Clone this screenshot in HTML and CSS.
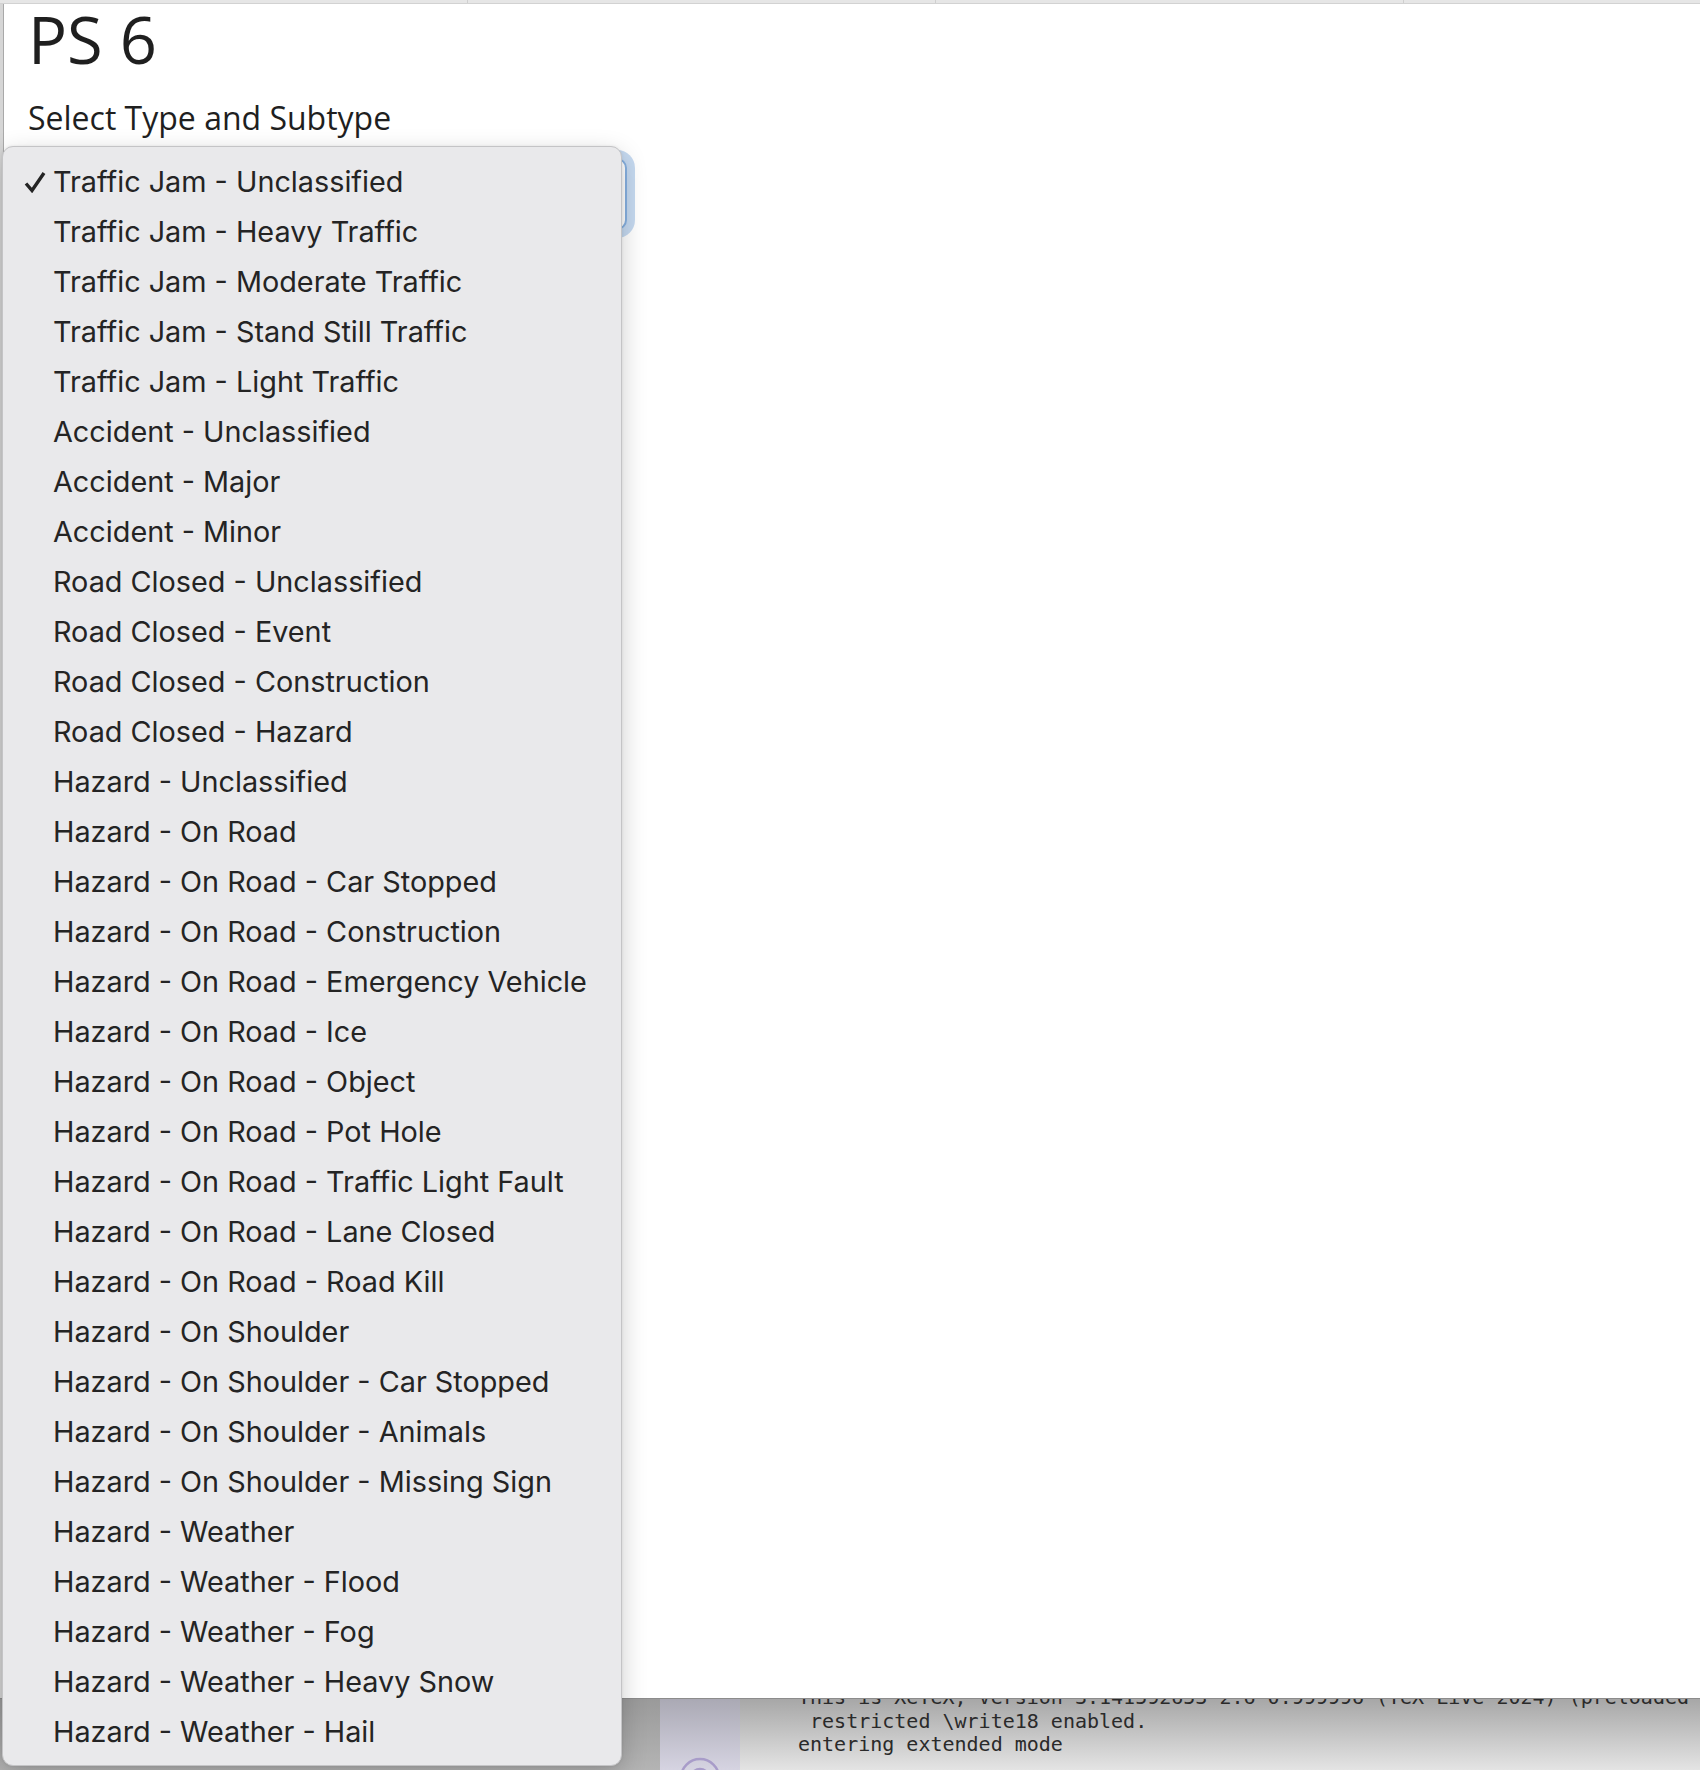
FILE: index.html
```
<!DOCTYPE html>
<html lang="en">
<head>
<meta charset="utf-8">
<title>PS 6</title>
<link rel="stylesheet" href="styles.css">
</head>
<body>
<div class="screen">
  <div class="tabstrip">
    <span class="tab"></span><span class="tab"></span><span class="tab"></span><span class="tab"></span>
  </div>
  <div class="workspace">
    <div class="edge"></div>
    <main class="page">
      <h1 class="title">PS 6</h1>
      <div class="label">Select Type and Subtype</div>
      <div class="select"></div>
    </main>
  </div>
  <div class="console-row">
    <div class="gutter"></div>
    <div class="sidebar">
      <svg class="sideicon" width="44" height="44" viewBox="0 0 44 44"><circle cx="22" cy="22" r="19" fill="none" stroke="#a89cc9" stroke-width="2.5"/><circle cx="22" cy="22" r="9" fill="none" stroke="#a89cc9" stroke-width="2.5"/></svg>
    </div>
    <pre class="console">This is XeTeX, Version 3.141592653-2.6-0.999996 (TeX Live 2024) (preloaded
 restricted \write18 enabled.
entering extended mode</pre>
  </div>

  <ul class="menu">
    <li class="item selected"><svg class="check" width="22" height="22" viewBox="0 0 22 22"><path d="M2 12.5 L8 19.5 L20 2" fill="none" stroke="#242424" stroke-width="3.4" stroke-linejoin="miter"/></svg>Traffic Jam - Unclassified</li>
    <li class="item">Traffic Jam - Heavy Traffic</li>
    <li class="item">Traffic Jam - Moderate Traffic</li>
    <li class="item">Traffic Jam - Stand Still Traffic</li>
    <li class="item">Traffic Jam - Light Traffic</li>
    <li class="item">Accident - Unclassified</li>
    <li class="item">Accident - Major</li>
    <li class="item">Accident - Minor</li>
    <li class="item">Road Closed - Unclassified</li>
    <li class="item">Road Closed - Event</li>
    <li class="item">Road Closed - Construction</li>
    <li class="item">Road Closed - Hazard</li>
    <li class="item">Hazard - Unclassified</li>
    <li class="item">Hazard - On Road</li>
    <li class="item">Hazard - On Road - Car Stopped</li>
    <li class="item">Hazard - On Road - Construction</li>
    <li class="item">Hazard - On Road - Emergency Vehicle</li>
    <li class="item">Hazard - On Road - Ice</li>
    <li class="item">Hazard - On Road - Object</li>
    <li class="item">Hazard - On Road - Pot Hole</li>
    <li class="item">Hazard - On Road - Traffic Light Fault</li>
    <li class="item">Hazard - On Road - Lane Closed</li>
    <li class="item">Hazard - On Road - Road Kill</li>
    <li class="item">Hazard - On Shoulder</li>
    <li class="item">Hazard - On Shoulder - Car Stopped</li>
    <li class="item">Hazard - On Shoulder - Animals</li>
    <li class="item">Hazard - On Shoulder - Missing Sign</li>
    <li class="item">Hazard - Weather</li>
    <li class="item">Hazard - Weather - Flood</li>
    <li class="item">Hazard - Weather - Fog</li>
    <li class="item">Hazard - Weather - Heavy Snow</li>
    <li class="item">Hazard - Weather - Hail</li>
  </ul>
</div>
</body>
</html>
```
FILE: styles.css
```
* { box-sizing: border-box; }
html, body { margin: 0; padding: 0; }
body { background: #ffffff; font-family: "Open Sans", "Noto Sans", sans-serif; }

.screen {
  position: relative;
  width: 1700px;
  height: 1770px;
  overflow: hidden;
  display: flex;
  flex-direction: column;
  background: #ffffff;
}

.tabstrip {
  height: 4px;
  flex: none;
  display: flex;
  background: #e6e6e6;
  border-bottom: 1px solid #d2d2d2;
}
.tab {
  width: 468px;
  border-right: 1px solid #cfcfcf;
}
.tab:last-child { flex: 1; border-right: none; }

.workspace {
  flex: none;
  height: 1694px;
  display: flex;
}
.edge {
  width: 4px;
  flex: none;
  background: #d6d6d6;
  border-right: 1px solid #a9a9a9;
}
.page {
  flex: 1;
  background: #ffffff;
  padding: 2px 0 0 24px;
}
.title {
  margin: 0;
  font-family: "Open Sans", sans-serif;
  font-weight: 400;
  font-size: 65px;
  line-height: 66px;
  color: #1f1f1f;
}
.label {
  margin-top: 30px;
  font-size: 32px;
  line-height: 32px;
  color: #1f1f1f;
}
.select {
  margin-top: 24px;
  width: 599px;
  height: 72px;
  background: #ffffff;
  border: 2px solid #86b0e0;
  border-radius: 10px;
  box-shadow: 0 0 0 8px rgba(150, 185, 228, 0.55);
}

.console-row {
  flex: 1;
  display: flex;
  border-top: 1px solid #8c8c8c;
}
.gutter {
  width: 660px;
  flex: none;
  background: linear-gradient(#9a9a9a, #b4b4b4);
}
.sidebar {
  width: 80px;
  flex: none;
  background: linear-gradient(#aaa9b4, #d6d4e2);
  display: flex;
  justify-content: center;
  align-items: flex-end;
  overflow: hidden;
}
.sideicon { margin-bottom: -30px; }
.console {
  flex: 1;
  margin: 0;
  padding: 0 0 0 58px;
  overflow: hidden;
  background: linear-gradient(#a7a7a7, #e4e4e4);
  font-family: "DejaVu Sans Mono", monospace;
  font-size: 20px;
  line-height: 23.5px;
  color: #2a2a2a;
  white-space: pre;
}
.console::before {
  content: "";
  display: block;
  margin-top: -13px;
}

.menu {
  position: absolute;
  left: 2px;
  top: 146px;
  width: 620px;
  margin: 0;
  padding: 10px 0 8px 0;
  list-style: none;
  background: #e9e9eb;
  border: 1px solid #c4c4c6;
  border-radius: 11px;
  box-shadow: 0 8px 26px rgba(0, 0, 0, 0.2), 0 0 3px rgba(0, 0, 0, 0.08);
}
.item {
  position: relative;
  height: 50px;
  padding-left: 50px;
  font-family: "Inter", "Liberation Sans", sans-serif;
  font-size: 28.8px;
  line-height: 50px;
  color: #242424;
  white-space: nowrap;
}
.check {
  position: absolute;
  left: 21px;
  top: 14px;
}
```
